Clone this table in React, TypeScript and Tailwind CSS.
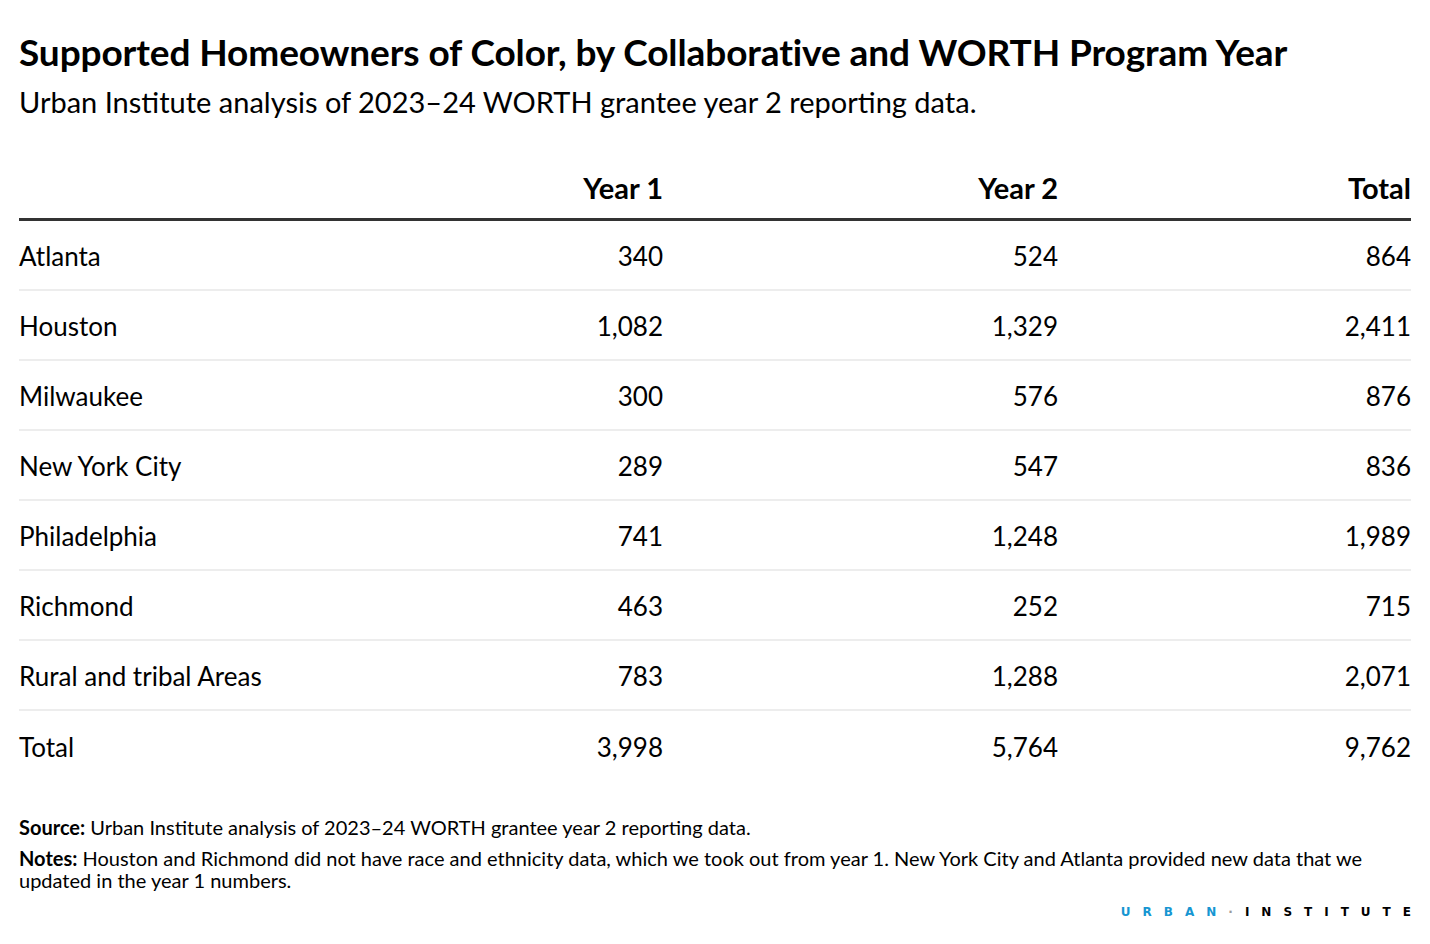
const rows = [
  { name: "Atlanta", y1: "340", y2: "524", total: "864" },
  { name: "Houston", y1: "1,082", y2: "1,329", total: "2,411" },
  { name: "Milwaukee", y1: "300", y2: "576", total: "876" },
  { name: "New York City", y1: "289", y2: "547", total: "836" },
  { name: "Philadelphia", y1: "741", y2: "1,248", total: "1,989" },
  { name: "Richmond", y1: "463", y2: "252", total: "715" },
  { name: "Rural and tribal Areas", y1: "783", y2: "1,288", total: "2,071" },
  { name: "Total", y1: "3,998", y2: "5,764", total: "9,762" },
];

const cols = "grid grid-cols-[344px_300px_395px_353px]";

export default function App() {
  return (
    <div className="w-[1430px] h-[944px] bg-white text-black font-['Lato','Noto_Sans',sans-serif] px-[19px] pt-[30px]">
      <h1 className="text-[37px] leading-[44px] font-bold tracking-[-0.1px]">
        Supported Homeowners of Color, by Collaborative and WORTH Program Year
      </h1>
      <p className="text-[29px] leading-[34px] mt-[11px]">
        Urban Institute analysis of 2023–24 WORTH grantee year 2 reporting data.
      </p>

      {/* table */}
      <div className="mt-[39px] w-[1392px]">
        <div className={`${cols} h-[63px] items-center text-[29px] font-bold border-b-[3px] border-[#333333]`}>
          <div></div>
          <div className="text-right">Year 1</div>
          <div className="text-right">Year 2</div>
          <div className="text-right">Total</div>
        </div>
        {rows.map((r, i) => (
          <div
            key={r.name}
            className={`${cols} h-[70px] pt-[3px] items-center text-[26px] ${i < rows.length - 1 ? "border-b-2 border-[#ededed]" : ""}`}
          >
            <div>{r.name}</div>
            <div className="text-right">{r.y1}</div>
            <div className="text-right">{r.y2}</div>
            <div className="text-right">{r.total}</div>
          </div>
        ))}
      </div>

      {/* notes */}
      <div className="mt-[35px] text-[20px] leading-[22px]">
        <p>
          <span className="font-bold">Source:</span> Urban Institute analysis of 2023–24 WORTH grantee year 2 reporting data.
        </p>
        <p className="mt-[9px] w-[1350px]">
          <span className="font-bold">Notes:</span> Houston and Richmond did not have race and ethnicity data, which we took out from year 1. New York City and Atlanta provided new data that we updated in the year 1 numbers.
        </p>
      </div>

      {/* logo */}
      <div className="flex justify-end w-[1392px] mt-[15px]">
        <div className="flex items-center font-['DejaVu_Sans',sans-serif] text-[12px] font-bold tracking-[12px] leading-[13px] -mr-[12px]">
          <span className="text-[#1696d2]">URBAN</span>
          <span className="text-[#9a9a9a]">·</span>
          <span>INSTITUTE</span>
        </div>
      </div>
    </div>
  );
}
